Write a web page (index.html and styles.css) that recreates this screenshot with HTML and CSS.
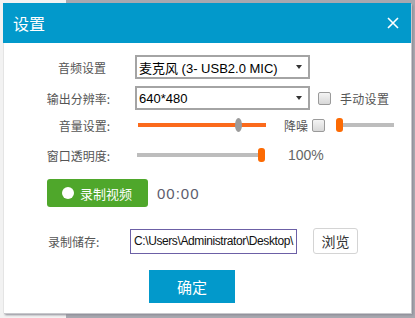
FILE: index.html
```html
<!DOCTYPE html>
<html lang="zh">
<head>
<meta charset="utf-8">
<link rel="stylesheet" href="styles.css">
</head>
<body>
<div class="dialog">
  <div class="titlebar">
    <span class="title">设置</span>
    <svg class="close" width="12" height="12" viewBox="0 0 12 12"><path d="M1 1L11 11M11 1L1 11" stroke="#fff" stroke-width="1.6" fill="none"/></svg>
  </div>
  <div class="content">
    <div class="row r1">
      <span class="lbl nocolon">音频设置</span>
      <div class="select"><span class="val">麦克风 (3- USB2.0 MIC)</span><span class="arrow"></span></div>
    </div>
    <div class="row r2">
      <span class="lbl">输出分辨率:</span>
      <div class="select"><span class="val">640*480</span><span class="arrow"></span></div>
      <span class="cb cb-manual"></span>
      <span class="cbtext">手动设置</span>
    </div>
    <div class="row r3">
      <span class="lbl">音量设置:</span>
      <div class="slider vol"><span class="track orange"></span><span class="thumb grey" style="left:97px"></span></div>
      <span class="noise">降噪</span>
      <span class="cb cb-noise"></span>
      <div class="slider small"><span class="track grey"></span><span class="thumb orange" style="left:0"></span></div>
    </div>
    <div class="row r4">
      <span class="lbl">窗口透明度:</span>
      <div class="slider opa"><span class="track grey"></span><span class="thumb orange" style="left:121px"></span></div>
      <span class="pct">100%</span>
    </div>
    <div class="row r5">
      <button class="rec"><span class="dot"></span>录制视频</button>
      <span class="time">00:00</span>
    </div>
    <div class="row r6">
      <span class="lbl2">录制储存:</span>
      <div class="path">C:\Users\Administrator\Desktop\</div>
      <button class="browse">浏览</button>
    </div>
    <div class="row r7">
      <button class="ok">确定</button>
    </div>
  </div>
</div>
</body>
</html>
```

FILE: styles.css
```css
html, body {
  margin: 0;
  padding: 0;
}
body {
  width: 415px;
  height: 318px;
  background: #a9a9b0;
  background: linear-gradient(to right, #f2f2f2 0, #f2f2f2 66px, #a8a8b0 66px);
  font-family: "Liberation Sans", "Noto Sans CJK SC", sans-serif;
  overflow: hidden;
  padding: 3px 0 0 3px;
  box-sizing: border-box;
}
.dialog {
  width: 408px;
  height: 310px;
  background: #fff;
  box-shadow: 1px 1px 0 #c8c8cc, 2px 2px 2px #8a8a94;
  display: flex;
  flex-direction: column;
}
.titlebar {
  height: 40px;
  background: #0299cb;
  display: flex;
  align-items: center;
  justify-content: space-between;
  padding: 0 12px 0 10px;
  flex: none;
}
.title {
  color: #fff;
  font-family: "Noto Sans CJK SC", sans-serif;
  font-size: 16px;
  line-height: 20px;
}
.close {
  display: block;
}
.content {
  flex: 1;
  display: flex;
  flex-direction: column;
  border-left: 1px solid #e4e4e4;
}
.row {
  display: flex;
  align-items: center;
  flex: none;
}
.lbl {
  width: 106px;
  text-align: right;
  font-family: "Noto Sans CJK SC", sans-serif;
  font-size: 12px;
  color: #555;
  margin-right: 25px;
}
.lbl.nocolon {
  width: 102px;
  margin-right: 29px;
}
.r1 { margin-top: 12px; height: 24px; }
.r2 { margin-top: 7px; height: 24px; }
.r3 { margin-top: 8px; height: 14px; }
.r4 { margin-top: 16px; height: 14px; }
.r5 { margin-top: 17px; height: 28px; padding-left: 43px; }
.r6 { margin-top: 21px; height: 27px; padding-left: 44px; }
.r7 { margin-top: 15px; padding-left: 145px; }

.select {
  width: 163px;
  height: 20px;
  border: 2px solid #a4a4a4;
  display: flex;
  align-items: center;
  justify-content: space-between;
  padding: 0 6px 0 2px;
  box-sizing: content-box;
  flex: none;
}
.select .val {
  font-size: 13px;
  color: #000;
  font-family: "Liberation Sans", "Noto Sans CJK SC", sans-serif;
  white-space: nowrap;
}
.arrow {
  width: 0;
  height: 0;
  border-left: 3px solid transparent;
  border-right: 3px solid transparent;
  border-top: 4px solid #333;
}
.cb {
  width: 11px;
  height: 11px;
  border: 1px solid #9a9a9a;
  border-radius: 2px;
  background: linear-gradient(#f4f4f4, #d8d8d8);
  flex: none;
}
.cb-manual { margin-left: 8px; }
.cbtext {
  margin-left: 9px;
  font-family: "Noto Sans CJK SC", sans-serif;
  font-size: 12px;
  letter-spacing: 0.3px;
  color: #555;
}
.slider {
  position: relative;
  height: 14px;
  flex: none;
}
.slider .track {
  position: absolute;
  left: 0;
  right: 0;
  top: 5px;
  height: 4px;
}
.track.orange { background: #fb6a1c; }
.track.grey { background: #bdbdbd; }
.slider .thumb {
  position: absolute;
  top: 0;
  width: 7px;
  height: 14px;
}
.thumb.grey {
  background: #9b9b9b;
  border-radius: 50%;
}
.thumb.orange {
  background: #fc6a03;
  border-radius: 3px;
}
.vol { width: 128px; margin-left: 3px; }
.noise {
  margin-left: 18px;
  font-family: "Noto Sans CJK SC", sans-serif;
  font-size: 12px;
  color: #555;
}
.cb-noise { margin-left: 4px; }
.slider.small { width: 58px; margin-left: 11px; }
.opa { width: 128px; margin-left: 2px; }
.pct {
  margin-left: 23px;
  font-family: "Liberation Sans", sans-serif;
  font-size: 14px;
  color: #666;
}
.rec {
  width: 101px;
  height: 28px;
  border: none;
  border-radius: 3px;
  background: #4fa72b;
  color: #fff;
  font-family: "Noto Sans CJK SC", sans-serif;
  font-size: 13px;
  display: flex;
  align-items: center;
  padding: 0 0 0 15px;
  margin: 0;
}
.dot {
  width: 12px;
  height: 12px;
  border-radius: 50%;
  background: #fff;
  margin-right: 6px;
}
.time {
  margin-left: 9px;
  font-family: "Liberation Sans", sans-serif;
  font-size: 15px;
  letter-spacing: 1px;
  color: #5d5d6e;
}
.lbl2 {
  width: 82px;
  font-family: "Noto Sans CJK SC", sans-serif;
  font-size: 12px;
  color: #555;
}
.path {
  width: 162px;
  height: 23px;
  border: 1px solid #6c60a6;
  padding: 0 0 0 3px;
  font-size: 12px;
  line-height: 23px;
  color: #111;
  white-space: nowrap;
  overflow: hidden;
  letter-spacing: -0.4px;
  flex: none;
}
.browse {
  margin-left: 16px;
  width: 45px;
  height: 26px;
  border: 1px solid #d4d4d4;
  border-radius: 3px;
  background: #fff;
  font-family: "Noto Sans CJK SC", sans-serif;
  font-size: 14px;
  color: #333;
  padding: 0;
  align-self: flex-start;
}
.ok {
  width: 86px;
  height: 33px;
  border: none;
  background: #0299cb;
  color: #fff;
  font-family: "Noto Sans CJK SC", sans-serif;
  font-size: 15px;
  padding: 0;
  margin: 0;
}
```
